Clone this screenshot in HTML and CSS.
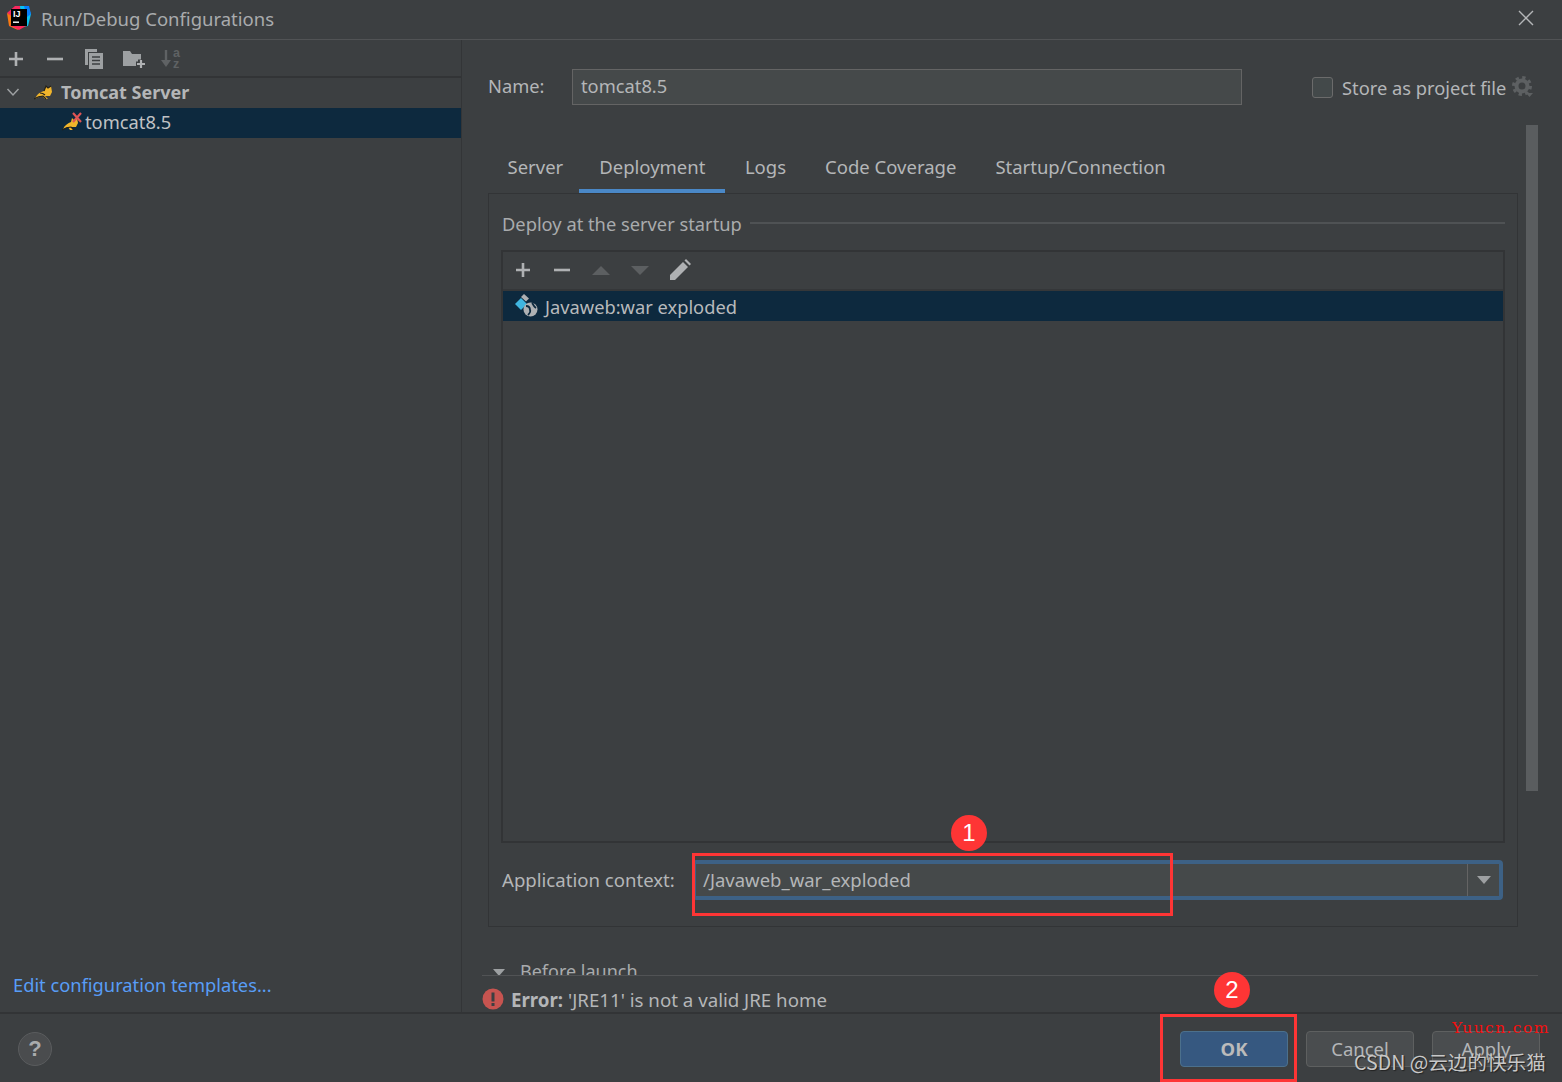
FILE: index.html
```html
<!DOCTYPE html>
<html lang="en">
<head>
<meta charset="utf-8">
<title>Run/Debug Configurations</title>
<link rel="stylesheet" href="styles.css">
</head>
<body>
<div class="dialog">
  <header class="titlebar">
    <svg class="app-logo" width="26" height="26" viewBox="0 0 26 26">
      <path d="M1 8 9 1h7L8 14z" fill="#f9285f"/>
      <path d="M1 8 3 21l9 4L7 12z" fill="#f97a12"/>
      <path d="M14 1h8l3 8-3 12-6 1z" fill="#07c3f2"/>
      <path d="M18 1h5l2 8-4 3z" fill="#087cfa"/>
      <path d="M3 20l10 5 7-4z" fill="#fe2857"/>
      <rect x="5" y="4" width="16" height="17" fill="#000"/>
      <text x="7" y="12" class="logo-text">IJ</text>
      <rect x="7" y="16.500" width="6" height="1.400" fill="#fff"/>
    </svg>
    <span class="title">Run/Debug Configurations</span>
    <svg class="close" width="16" height="16" viewBox="0 0 16 16"><path d="M1 1l14 14M15 1 1 15" stroke="#b4b6b8" stroke-width="1.400" fill="none"/></svg>
  </header>

  <div class="main">
    <aside class="sidebar">
      <div class="side-toolbar">
        <span class="tool"><svg width="18" height="18" viewBox="0 0 18 18"><path d="M9 2v14M2 9h14" stroke="#afb1b3" stroke-width="2.600"/></svg></span>
        <span class="tool"><svg width="18" height="18" viewBox="0 0 18 18"><path d="M1 9h16" stroke="#afb1b3" stroke-width="2.600"/></svg></span>
        <span class="tool"><svg width="20" height="22" viewBox="0 0 20 22"><path d="M1 1h12v3H4v13H1z" fill="#9da0a2"/><path d="M5 5h14v16H5z" fill="#9da0a2"/><path d="M8 9h8M8 12.500h8M8 16h8" stroke="#3c3f41" stroke-width="1.600"/></svg></span>
        <span class="tool tool-folder"><svg width="24" height="20" viewBox="0 0 24 20"><path d="M1 2h7l2 3h9v12H1z" fill="#9da0a2"/><path d="M14 15h9M18.500 10.500v9" stroke="#3c3f41" stroke-width="5"/><path d="M15 15h8M19 11v8" stroke="#afb1b3" stroke-width="2.200"/></svg></span>
        <span class="tool"><svg width="22" height="26" viewBox="0 -3 22 26"><path d="M5 1v12" stroke="#5f6264" stroke-width="2.400"/><path d="M0 11h10l-5 7z" fill="#5f6264"/><text x="12" y="8" class="sort-text">a</text><text x="12" y="18.500" class="sort-text">z</text></svg></span>
      </div>
      <div class="tree-row tree-parent">
        <svg class="chev" width="14" height="10" viewBox="0 0 14 10"><path d="M1.500 2 7 8l5.500-6" stroke="#9da0a2" stroke-width="1.500" fill="none"/></svg>
        <svg class="cat" width="20" height="16" viewBox="0 0 20 16"><path d="M1 15c2-5 5-7 9-8l2-5 2 2 3-2 1 6-2 4-5 0 3 3-3 0-3-3-3 1z" fill="#f1b52b"/><path d="M0 15c3-2 6-3 9-3l3 3M6 9c1 0 3 0 5 2M10 7l2-5 2 2 3-2" stroke="#24211a" stroke-width="1.200" fill="none"/></svg>
        <span class="tree-bold">Tomcat Server</span>
      </div>
      <div class="tree-row tree-child">
        <svg class="cat-x" width="22" height="20" viewBox="0 0 22 20"><path d="M1 17c2-4 5-6 8-7l1-4 2 2 3-2 1 5-2 4-5 0 2 3-3 0-2-3z" fill="#f1b52b"/><path d="M0 18c3-2 6-3 9-3l3 3" stroke="#24211a" stroke-width="1.200" fill="none"/><path d="M11 1l8 9M19 1l-8 9" stroke="#e05555" stroke-width="2.200"/></svg>
        <span class="tree-label">tomcat8.5</span>
      </div>
      <a class="edit-link">Edit configuration templates...</a>
    </aside>

    <section class="content">
      <div class="name-row">
        <label class="name-label">Name:</label>
        <div class="name-input">tomcat8.5</div>
        <div class="store">
          <span class="checkbox"></span>
          <span class="store-label">Store as project file</span>
          <svg class="gear" width="22" height="22" viewBox="0 0 22 22"><circle cx="10" cy="10" r="5.500" stroke="#5d6062" stroke-width="4" fill="#3c3f41"/><circle cx="10" cy="10" r="8.500" stroke="#5d6062" stroke-width="3" stroke-dasharray="3.300 3.370" fill="none"/><path d="M14 17h7l-3.500 4z" fill="#5d6062"/></svg>
        </div>
      </div>

      <nav class="tabs">
        <span class="tab tab-first">Server</span>
        <span class="tab tab-active">Deployment</span>
        <span class="tab">Logs</span>
        <span class="tab">Code Coverage</span>
        <span class="tab">Startup/Connection</span>
      </nav>

      <div class="panel">
        <div class="group-title"><span>Deploy at the server startup</span><i class="group-line"></i></div>
        <div class="artifact-box">
          <div class="box-toolbar">
            <svg width="18" height="18" viewBox="0 0 18 18"><path d="M9 2v14M2 9h14" stroke="#afb1b3" stroke-width="2.600"/></svg>
            <svg width="18" height="18" viewBox="0 0 18 18"><path d="M1 9h16" stroke="#afb1b3" stroke-width="2.600"/></svg>
            <svg width="18" height="18" viewBox="0 0 18 18"><path d="M0 14 9 5l9 9z" fill="#5c5f61"/></svg>
            <svg width="18" height="18" viewBox="0 0 18 18"><path d="M0 5h18l-9 9z" fill="#5c5f61"/></svg>
            <svg class="pencil" width="22" height="22" viewBox="0 0 22 22"><path d="M1 21v-5L14 3l5 5L6 21z" fill="#afb1b3"/><path d="M15.500 1.500 17 0l5 5-1.500 1.500z" fill="#afb1b3"/></svg>
          </div>
          <div class="artifact-row">
            <svg class="artifact-ic" width="24" height="24" viewBox="0 0 24 24"><path d="M0 10 6 4l6 6-6 6z" fill="#40b6e0"/><path d="M9 0l5 4.500-3 3-5-4.500z" fill="#aeb0b2"/><circle cx="15.500" cy="15.500" r="7" fill="#afb1b3"/><path d="M11 12c3 0 4 2 4 4 1 2-1 4-2 5M17 9c2 2 1 3 4 5" stroke="#0d293e" stroke-width="1.800" fill="none"/></svg>
            <span>Javaweb:war exploded</span>
          </div>
        </div>
        <div class="context-row">
          <label>Application context:</label>
          <div class="combo">
            <span class="combo-text">/Javaweb_war_exploded</span>
            <span class="combo-btn"><svg width="14" height="8" viewBox="0 0 14 8"><path d="M0 0h14L7 8z" fill="#9da0a2"/></svg></span>
          </div>
        </div>
      </div>

      <div class="before-clip">
        <svg width="12" height="7" viewBox="0 0 12 7"><path d="M0 0h12L6 7z" fill="#9da0a2"/></svg>
        <span>Before launch</span>
      </div>
      <div class="error-row">
        <svg width="22" height="22" viewBox="0 0 22 22"><circle cx="11" cy="11" r="10.500" fill="#c75450"/><rect x="9.500" y="4.500" width="3" height="9" fill="#3c3f41"/><rect x="9.500" y="15" width="3" height="3" fill="#3c3f41"/></svg>
        <span><b>Error:</b> 'JRE11' is not a valid JRE home</span>
      </div>
      <div class="scrollbar"></div>
    </section>
  </div>

  <footer class="footer">
    <span class="help">?</span>
    <div class="buttons">
      <span class="btn btn-ok">OK</span>
      <span class="btn">Cancel</span>
      <span class="btn">Apply</span>
    </div>
  </footer>

  <div class="mark mark-1"></div>
  <div class="mark mark-2"></div>
  <div class="badge badge-1">1</div>
  <div class="badge badge-2">2</div>
  <div class="wm-yuucn">Yuucn.com</div>
  <div class="wm-csdn">CSDN @云边的快乐猫</div>
</div>
</body>
</html>
```
FILE: styles.css
```css
* { box-sizing: border-box; }
html, body { margin: 0; padding: 0; }
body { background: #3c3f41; font-family: "Noto Sans", "Noto Sans CJK SC", sans-serif; color: #b4b6b8; font-size: 18.3px; }
.dialog { position: relative; width: 1562px; height: 1082px; display: flex; flex-direction: column; background: #3c3f41; overflow: hidden; }

.titlebar { height: 40px; flex: none; display: flex; align-items: center; padding: 0 28px 3px 6px; border-bottom: 1px solid #515355; }
.app-logo { flex: none; }
.logo-text { font: bold 9px "Liberation Sans", sans-serif; fill: #fff; }
.title { margin-left: 9px; font-size: 18.5px; color: #a9abad; }
.close { margin-left: auto; }

.main { flex: 1; display: flex; min-height: 0; }
.sidebar { width: 462px; flex: none; display: flex; flex-direction: column; border-right: 1px solid #333537; }
.side-toolbar { height: 38px; flex: none; display: flex; align-items: center; padding-top: 1px; border-bottom: 2px solid #323436; }
.tool { width: 39px; height: 26px; flex: none; display: flex; align-items: center; justify-content: center; }
.tool:first-child { margin-left: -4px; }
.tool-folder { padding-left: 2px; }
.sort-text { font: bold 12.500px "Liberation Sans", sans-serif; fill: #5f6264; }
.tree-row { height: 30px; flex: none; display: flex; align-items: center; padding-bottom: 3px; }
.tree-parent { padding-left: 6px; }
.cat { margin-left: 14px; }
.tree-bold { margin-left: 7px; font-weight: 700; font-size: 18px; color: #b4b6b8; }
.tree-child { background: #0d293e; padding-left: 62px; color: #c0c2c4; }
.cat-x { margin-right: 1px; }
.edit-link { margin-top: auto; height: 39px; padding: 0 0 0 13px; color: #589df6; line-height: 24px; flex: none; }

.content { flex: 1; position: relative; min-width: 0; display: flex; flex-direction: column; padding: 29px 0 0 26px; }
.name-row { height: 36px; flex: none; display: flex; align-items: center; }
.name-label { width: 84px; flex: none; color: #b4b6b8; padding-bottom: 3px; }
.name-input { width: 670px; height: 36px; flex: none; background: #45494a; border: 1px solid #646464; padding-left: 8px; line-height: 32px; color: #b4b6b8; }
.store { display: flex; align-items: center; margin-left: 70px; }
.checkbox { width: 21px; height: 21px; border: 1px solid #6b6b6b; border-radius: 3px; background: #43494a; flex: none; }
.store-label { margin-left: 9px; color: #b4b6b8; }
.gear { margin-left: 6px; flex: none; }

.tabs { margin-top: 45px; width: 1030px; height: 43px; flex: none; display: flex; font-size: 18.500px; }
.tab { padding: 0 19.500px; line-height: 34px; color: #b4b6b8; height: 43px; }
.tab-first { padding-right: 16px; }
.tab-active { border-bottom: 4px solid #4a88c7; padding: 0 20px; }

.panel { width: 1030px; height: 734px; flex: none; border: 1px solid #323436; padding: 12px 12px 0 13px; display: flex; flex-direction: column; }
.group-title { height: 34px; flex: none; display: flex; align-items: center; gap: 8px; color: #a9abad; }
.group-line { flex: 1; height: 2px; background: #4f5254; }
.artifact-box { height: 593px; flex: none; border: 2px solid #323436; display: flex; flex-direction: column; margin: 10px 0 0 -1px; }
.box-toolbar { height: 39px; flex: none; display: flex; align-items: center; padding: 0 0 2px 11px; gap: 21px; border-bottom: 2px solid #353739; }
.pencil { margin-left: -1px; }
.artifact-row { height: 30px; flex: none; background: #0d293e; display: flex; align-items: center; padding-left: 12px; color: #b8babc; gap: 6px; }
.context-row { display: flex; align-items: center; margin-top: 17px; height: 40px; color: #b4b6b8; }
.context-row label { flex: none; width: 190px; padding-bottom: 2px; font-size: 18.600px; }
.combo { width: 811px; height: 40px; flex: none; display: flex; background: #45494a; border: 4px solid #3d6185; border-radius: 4px; font-size: 18.500px; }
.combo-text { flex: 1; padding-left: 7px; line-height: 32px; color: #b4b6b8; }
.combo-btn { width: 32px; border-left: 1px solid #646464; display: flex; align-items: center; justify-content: center; }

.before-clip { margin-top: 31px; height: 17px; overflow: hidden; flex: none; display: flex; align-items: flex-start; gap: 15px; padding-left: 5px; color: #a9abad; margin-right: 24px; font-size: 18px; }
.before-clip svg { margin-top: 11px; flex: none; }
.before-clip span { line-height: 26px; }
.error-row { margin-left: -6px; margin-right: 24px; flex: none; height: 38px; border-top: 1px solid #515355; display: flex; align-items: center; gap: 7px; color: #b4b6b8; padding-top: 9px; font-size: 18.700px; }
.error-row svg { flex: none; }
.error-row b { font-weight: 700; }
.scrollbar { position: absolute; left: 1064px; top: 85px; width: 12px; height: 666px; background: #5a5d5f; }

.footer { height: 70px; flex: none; display: flex; align-items: center; justify-content: space-between; padding: 2px 22px 0 18px; border-top: 2px solid #323436; }
.help { width: 34px; height: 34px; border-radius: 50%; background: #4a4c4e; border: 1px solid #5a5c5e; display: flex; align-items: center; justify-content: center; font-weight: 700; font-size: 22px; color: #a9abad; font-family: "Liberation Sans", sans-serif; }
.buttons { display: flex; gap: 18px; }
.btn { width: 108px; height: 36px; border: 1px solid #5e6060; border-radius: 4px; background: #4a4d4f; text-align: center; line-height: 34px; color: #b4b6b8; font-size: 18.500px; }
.btn-ok { background: #365880; border-color: #4c708c; font-weight: 700; color: #bbbbbb; }

.mark { position: absolute; border: 3px solid #fe3535; }
.mark-1 { left: 692px; top: 853px; width: 481px; height: 63px; }
.mark-2 { left: 1160px; top: 1014px; width: 137px; height: 68px; }
.badge { position: absolute; width: 36px; height: 36px; border-radius: 50%; background: #fe3535; color: #fff; font: 24px/36px "Liberation Sans", sans-serif; text-align: center; }
.badge-1 { left: 951px; top: 815px; }
.badge-2 { left: 1214px; top: 972px; }
.wm-yuucn { position: absolute; left: 1452px; top: 1017px; color: #f40f0f; font: 15.500px/22px "DejaVu Serif", serif; letter-spacing: 1.400px; white-space: nowrap; }
.wm-csdn { position: absolute; left: 1354px; top: 1049px; color: #c8c8c8; font: 19.600px/26px "Noto Sans CJK SC", "Noto Sans", sans-serif; white-space: nowrap; text-shadow: 1px 1px 1px #222; }
```
